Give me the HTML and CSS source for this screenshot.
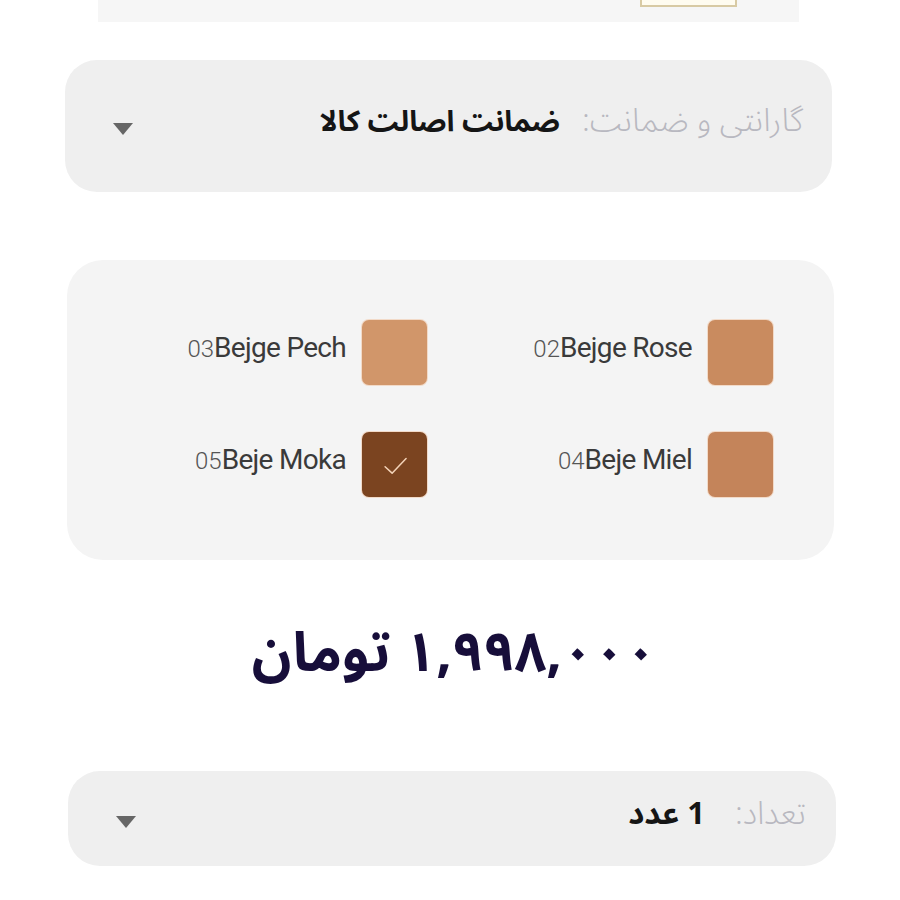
FILE: index.html
```html
<!DOCTYPE html>
<html lang="fa" dir="rtl">
<head>
<meta charset="utf-8">
<title>محصول</title>
<link rel="stylesheet" href="styles.css">
</head>
<body>
<div class="page">
  <div class="top-strip">
    <div class="top-box"></div>
  </div>

  <div class="select warranty">
    <div class="select-text">
      <span class="select-label">گارانتی و ضمانت:</span>
      <span class="select-value">ضمانت اصالت کالا</span>
    </div>
    <span class="caret"></span>
  </div>

  <div class="colors">
    <div class="color-item">
      <span class="swatch sw-rose"></span>
      <span class="color-name" dir="ltr"><span class="code">02</span>Bejge Rose</span>
    </div>
    <div class="color-item">
      <span class="swatch sw-pech"></span>
      <span class="color-name" dir="ltr"><span class="code">03</span>Bejge Pech</span>
    </div>
    <div class="color-item">
      <span class="swatch sw-miel"></span>
      <span class="color-name" dir="ltr"><span class="code">04</span>Beje Miel</span>
    </div>
    <div class="color-item">
      <span class="swatch sw-moka selected">
        <svg class="check" viewBox="0 0 24 24" width="28" height="28"><path d="M3.5 13.5l6 5.5L21.5 6.5" fill="none" stroke="#f3d3b8" stroke-width="1.3" stroke-linecap="round" stroke-linejoin="round"/></svg>
      </span>
      <span class="color-name" dir="ltr"><span class="code">05</span>Beje Moka</span>
    </div>
  </div>

  <div class="price">۱,۹۹۸,۰۰۰ تومان</div>

  <div class="select quantity">
    <div class="select-text qty-text">
      <span class="select-label">تعداد:</span>
      <span class="select-value qty-value">1 عدد</span>
    </div>
    <span class="caret"></span>
  </div>
</div>
</body>
</html>
```

FILE: styles.css
```css
* { box-sizing: border-box; }
html, body {
  margin: 0;
  padding: 0;
  background: #ffffff;
}
body {
  font-family: "Noto Sans Arabic", "DejaVu Sans", "Noto Sans", sans-serif;
  color: #222;
  width: 900px;
  height: 900px;
  overflow: hidden;
}
.page {
  display: flex;
  flex-direction: column;
}
.top-strip {
  width: 701px;
  height: 22px;
  margin-right: 101px;
  background: #f6f6f6;
  display: flex;
  justify-content: flex-start;
  padding-right: 62px;
}
.top-box {
  width: 97px;
  height: 7px;
  background: #fffcf0;
  border: 2px solid #d8caa4;
  border-top: none;
}
.select {
  display: flex;
  align-items: center;
  justify-content: space-between;
  background: #efefef;
}
.warranty {
  margin-top: 38px;
  margin-right: 68px;
  width: 767px;
  height: 132px;
  border-radius: 32px;
  padding: 0 29px 10px 48px;
}
.select-text {
  display: flex;
  align-items: baseline;
  gap: 22px;
}
.qty-text {
  gap: 30px;
}
.select-label {
  font-size: 32px;
  font-weight: 300;
  color: #b8b8c0;
}
.select-value {
  font-size: 29px;
  font-weight: 700;
  color: #151515;
}
.caret {
  width: 0;
  height: 0;
  border-left: 10px solid transparent;
  border-right: 10px solid transparent;
  border-top: 12px solid #666;
  margin-top: 16px;
}
.colors {
  margin-top: 68px;
  margin-right: 66px;
  width: 767px;
  height: 300px;
  background: #f4f4f4;
  border-radius: 36px;
  padding: 60px 61px 0 0;
  display: grid;
  grid-template-columns: 346px 346px;
  grid-auto-rows: 65px;
  row-gap: 47px;
}
.color-item {
  display: flex;
  align-items: center;
  gap: 16px;
}
.swatch {
  width: 65px;
  height: 65px;
  border-radius: 7px;
  flex: none;
  display: flex;
  align-items: center;
  justify-content: center;
  box-shadow: 0 0 0 1px rgba(240, 200, 170, 0.6);
}
.sw-rose { background: #c98b5f; }
.sw-pech { background: #d1966a; }
.sw-miel { background: #c4845a; }
.sw-moka { background: #7b4420; }
.color-name {
  font-family: "Roboto", "Liberation Sans", sans-serif;
  font-size: 28px;
  color: #3a3a3a;
  letter-spacing: -0.7px;
  margin-top: -10px;
}
.code {
  font-size: 24px;
  font-weight: 300;
  color: #555;
  letter-spacing: 0;
}
.price {
  margin-top: 52px;
  height: 84px;
  line-height: 84px;
  text-align: center;
  padding-left: 8px;
  font-size: 55px;
  font-weight: 700;
  color: #170e3a;
}
.quantity {
  margin-top: 75px;
  margin-right: 64px;
  width: 768px;
  height: 95px;
  border-radius: 32px;
  padding: 0 30px 10px 48px;
}
.qty-value {
  font-size: 31px;
}
```
